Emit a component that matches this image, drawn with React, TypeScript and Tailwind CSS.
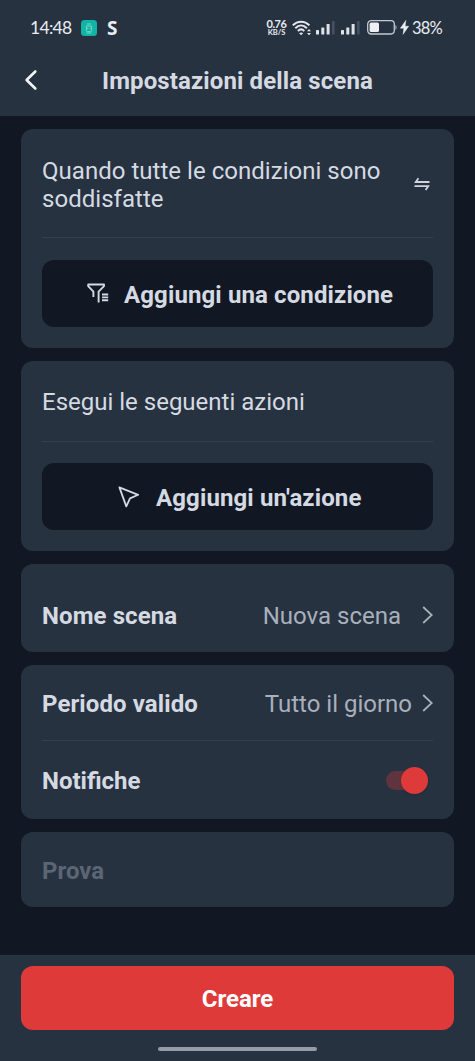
import type { ReactNode } from 'react'

function SignalBars() {
  return (
    <svg width="19" height="15" viewBox="0 0 19 15" className="shrink-0">
      <rect x="0" y="10" width="3" height="4.5" rx="0.6" fill="#dfe3e9" />
      <rect x="5.3" y="7.5" width="3" height="7" rx="0.6" fill="#dfe3e9" />
      <rect x="10.6" y="4" width="3" height="10.5" rx="0.6" fill="#dfe3e9" />
      <rect x="16" y="1" width="2.6" height="13.5" rx="0.6" fill="#465160" />
    </svg>
  )
}

function WifiIcon() {
  return (
    <svg width="20" height="16" viewBox="0 0 20 16" fill="none" className="shrink-0">
      <g stroke="#e3e7ec" strokeWidth="2">
        <path d="M0.8 5.4C5.6 0.5 12.6 0.5 17.4 5.4" />
        <path d="M3.3 8.2C6.8 4.7 11.4 4.7 14.9 8.2" />
        <path d="M5.9 10.9C7.8 9.1 10.4 9.1 12.3 10.9" />
      </g>
      <path d="M9.1 15.2L7.1 13.2C8.2 12.2 10 12.2 11.1 13.2Z" fill="#e3e7ec" />
      <path d="M15 11.3L17 9L19 11.3ZM15 12.9H19L17 15.2Z" fill="#e3e7ec" />
    </svg>
  )
}

function BatteryIcon() {
  return (
    <svg width="30" height="15" viewBox="0 0 30 15" fill="none" className="shrink-0">
      <rect x="0.7" y="0.7" width="26.6" height="13.3" rx="3.4" stroke="#c3c9d1" strokeWidth="1.3" />
      <rect x="2.6" y="2.6" width="9.4" height="9.5" rx="1.6" fill="#eef0f3" />
      <path d="M28.5 5v4.8c1.3-.5 1.3-4.3 0-4.8z" fill="#c3c9d1" />
    </svg>
  )
}

function FilterListIcon() {
  return (
    <svg width="22" height="21" viewBox="0 0 22 21" fill="none" className="shrink-0">
      <path
        d="M6.4 14V8.6L1.2 3.2V1.5H17V3.2L11.6 8.6V19.5"
        stroke="#d5dae2"
        strokeWidth="1.9"
        strokeLinejoin="round"
      />
      <path d="M15 11.5h6.2M15 14.4h6.2M15 17.3h6.2" stroke="#d5dae2" strokeWidth="1.9" />
    </svg>
  )
}

function CursorIcon() {
  return (
    <svg width="22" height="22" viewBox="0 0 22 22" fill="none" className="shrink-0">
      <path
        d="M1.4 1.4L20.2 8.8L12 12.4L8.3 20.4Z"
        stroke="#d5dae2"
        strokeWidth="1.8"
        strokeLinejoin="round"
      />
    </svg>
  )
}

function SwapIcon() {
  return (
    <svg width="16" height="14" viewBox="0 0 16 14" fill="none" className="shrink-0">
      <path d="M15.5 5H1.8L4.4 1.2M0.5 9.2H14.2L11.6 13" stroke="#cfd5dd" strokeWidth="1.8" />
    </svg>
  )
}

function ChevronRight() {
  return (
    <svg width="11" height="18" viewBox="0 0 11 18" fill="none" className="shrink-0">
      <path d="M1.2 1L9.7 9L1.2 17" stroke="#a8b0bb" strokeWidth="1.8" />
    </svg>
  )
}

function StatusBar() {
  return (
    <div className="flex h-[55px] items-center pl-[30px] font-[Lato,sans-serif] text-[#e9ecf0]">
      <span className="w-[51px] text-[17.5px] leading-5 tracking-[-0.7px] whitespace-nowrap">14:48</span>
      <svg width="16" height="16" viewBox="0 0 16 16" fill="none" className="shrink-0">
        <rect width="16" height="16" rx="3.5" fill="#12b5a5" />
        <path d="M6 4h4M5.4 6v4.5c0 .8.4 1.2 1.2 1.2h2.8c.8 0 1.2-.4 1.2-1.2V6zM6.7 8v1M9.3 8v1M5.5 13h5" stroke="#8be0d5" strokeWidth="0.8" />
      </svg>
      <span className="ml-[10px] w-[11px] font-['Noto_Sans',sans-serif] text-[19px] leading-5 font-bold">S</span>
      <div className="ml-[148px] w-[21px] text-center font-bold whitespace-nowrap">
        <div className="text-[11px] leading-[11px] tracking-[-0.5px]">0.76</div>
        <div className="text-[7.5px] leading-[8px]">KB/S</div>
      </div>
      <div className="ml-[5px] flex items-center">
        <WifiIcon />
        <div className="ml-[4px] flex gap-[6px]">
          <SignalBars />
          <SignalBars />
        </div>
      </div>
      <div className="ml-[7px] flex items-center">
        <BatteryIcon />
        <svg width="9" height="15" viewBox="0 0 9 15" className="ml-[3px] shrink-0">
          <path d="M5.8 0.5L0.4 8.2H3.9L3.1 14.3L8.6 6.3H5.1Z" fill="#e9ecf0" stroke="#e9ecf0" strokeWidth="0.5" />
        </svg>
      </div>
      <span className="ml-[3px] text-[16.5px] leading-5 tracking-[-0.8px] whitespace-nowrap">38%</span>
    </div>
  )
}

function Card({ className, children }: { className: string; children: ReactNode }) {
  return <section className={`rounded-xl bg-[#273241] px-[21px] ${className}`}>{children}</section>
}

function AddButton({ icon, label, className }: { icon: ReactNode; label: string; className: string }) {
  return (
    <button
      className={`flex h-[67px] w-[391px] items-center rounded-xl bg-[#111823] text-[24px] font-bold tracking-[0.12px] whitespace-nowrap ${className}`}
    >
      {icon}
      <span className="pt-[2px]">{label}</span>
    </button>
  )
}

export default function App() {
  return (
    <div className="flex h-[1061px] w-[475px] flex-col bg-[#111823] font-[Roboto,sans-serif] text-[#d5dae2]">
      <header className="h-[116px] shrink-0 bg-[#273241]">
        <StatusBar />
        <div className="flex h-[50px] items-center">
          <svg width="14" height="22" viewBox="0 0 14 22" fill="none" className="ml-[24px] shrink-0">
            <path
              d="M11.3 2.5L2.6 11L11.3 19.5"
              stroke="#f1f3f5"
              strokeWidth="2.6"
              strokeLinecap="round"
              strokeLinejoin="round"
            />
          </svg>
          <h1 className="ml-[64px] pt-[2px] text-[24px] font-bold tracking-[0.12px] whitespace-nowrap">
            Impostazioni della scena
          </h1>
        </div>
      </header>

      <main className="flex grow flex-col px-[21px] pt-[13px]">
        {/* Conditions */}
        <Card className="h-[219px]">
          <div className="flex h-[109px] items-center justify-between border-b border-[#343f4e]">
            <p className="pt-[4px] text-[24px] leading-[28px] tracking-[0.03px] whitespace-nowrap">
              Quando tutte le condizioni sono
              <br />
              soddisfatte
            </p>
            <div className="pt-[1px] pr-[3px]">
              <SwapIcon />
            </div>
          </div>
          <AddButton
            icon={<FilterListIcon />}
            label="Aggiungi una condizione"
            className="mt-[22px] gap-[15px] pl-[45px]"
          />
        </Card>

        {/* Actions */}
        <Card className="mt-[13px] h-[190px]">
          <div className="flex h-[81px] items-center border-b border-[#343f4e]">
            <p className="pt-[2px] text-[24px] leading-[28px] whitespace-nowrap">Esegui le seguenti azioni</p>
          </div>
          <AddButton icon={<CursorIcon />} label="Aggiungi un'azione" className="mt-[21px] gap-[16px] pl-[76px]" />
        </Card>

        <Card className="mt-[13px] flex h-[88px] items-center pt-[14px]">
          <span className="grow pt-[2px] text-[24px] font-bold tracking-[0.1px]">Nome scena</span>
          <span className="mr-[21px] pt-[2px] text-[24px] text-[#a8b0bb]">Nuova scena</span>
          <ChevronRight />
        </Card>

        <Card className="mt-[13px] h-[154px]">
          <div className="flex h-[76px] items-center border-b border-[#343f4e]">
            <span className="grow pt-[2px] text-[24px] font-bold tracking-[0.1px]">Periodo valido</span>
            <span className="mr-[10px] pt-[2px] text-[24px] text-[#a8b0bb]">Tutto il giorno</span>
            <ChevronRight />
          </div>
          <div className="flex h-[78px] items-center justify-between">
            <span className="pt-[2px] text-[24px] font-bold">Notifiche</span>
            <div className="mr-[5px] flex h-[19px] w-[42px] items-center justify-end rounded-full bg-[#60343f]">
              <div className="size-[27px] shrink-0 rounded-full bg-[#df3a3a] shadow" />
            </div>
          </div>
        </Card>

        <Card className="mt-[13px] flex h-[75px] items-center">
          <span className="pt-[2px] text-[24px] font-bold text-[#5b6575]">Prova</span>
        </Card>
      </main>

      <footer className="flex h-[106px] shrink-0 flex-col items-center bg-[#273241] pt-[11px]">
        <button className="h-[64px] w-[433px] rounded-xl bg-[#df3a3a] pt-[2px] text-[24px] font-bold text-white">
          Creare
        </button>
        <div className="mt-[17px] h-[4px] w-[159px] rounded-full bg-[#959ca6]" />
      </footer>
    </div>
  )
}
